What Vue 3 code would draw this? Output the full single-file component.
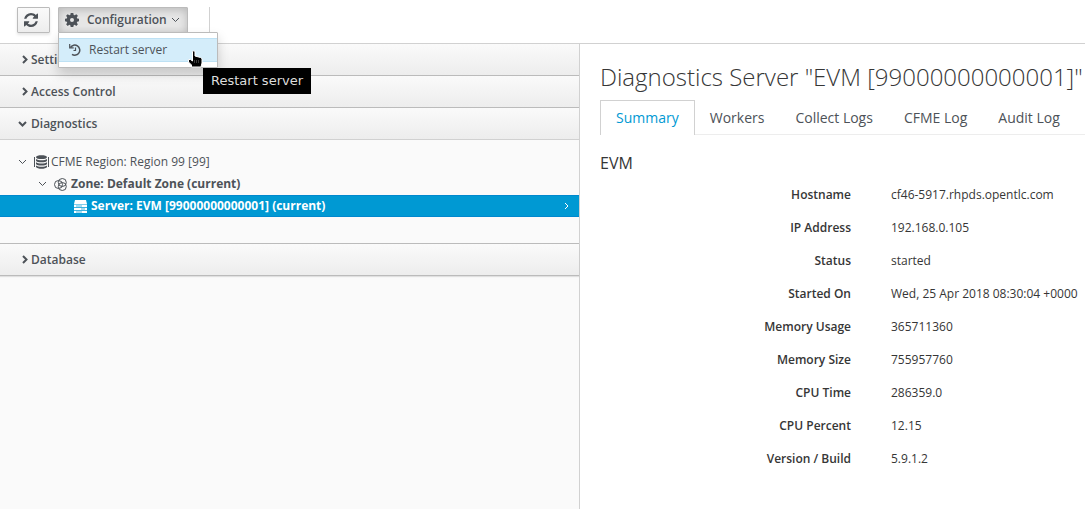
<script setup>
const tabs = ['Summary', 'Workers', 'Collect Logs', 'CFME Log', 'Audit Log']
const rows = [
  ['Hostname', 'cf46-5917.rhpds.opentlc.com'],
  ['IP Address', '192.168.0.105'],
  ['Status', 'started'],
  ['Started On', 'Wed, 25 Apr 2018 08:30:04 +0000'],
  ['Memory Usage', '365711360'],
  ['Memory Size', '755957760'],
  ['CPU Time', '286359.0'],
  ['CPU Percent', '12.15'],
  ['Version / Build', '5.9.1.2'],
]
</script>

<template>
  <div class="app">
    <header class="toolbar">
      <button class="btn refresh" type="button" aria-label="Refresh">
        <svg width="14" height="14" viewBox="0 0 1536 1536" fill="currentColor"><path d="M1511 928q0 5-1 7-64 268-268 434.500T764 1536q-146 0-282.500-55T238 1324l-129 129q-19 19-45 19t-45-19-19-45V960q0-26 19-45t45-19h448q26 0 45 19t19 45-19 45l-137 137q71 66 161 102t187 36q134 0 250-65t186-179q11-17 53-117 8-23 30-23h192q13 0 22.500 9.500T1511 928zM1536 128v448q0 26-19 45t-45 19h-448q-26 0-45-19t-19-45 19-45l138-138Q969 256 768 256q-134 0-250 65T332 500q-11 17-53 117-8 23-30 23H50q-13 0-22.500-9.500T18 608v-7q65-268 270-434.500T768 0q146 0 284 55.500T1297 212l130-129q19-19 45-19t45 19 19 45z" /></svg>
      </button>
      <div class="dropdown">
        <button class="btn open" type="button" aria-haspopup="menu" aria-expanded="true">
          <svg width="14" height="14" viewBox="0 0 14 14" fill="currentColor" fill-rule="evenodd"><path d="M5.700 0h2.600l.4 1.900 1 .4L11.300 1.200l1.600 1.600-1.100 1.600.4 1 1.800.4v2.500l-1.800.4-.4 1 1.100 1.600-1.600 1.600-1.600-1.100-1 .4-.4 1.800H5.700l-.4-1.800-1-.4-1.600 1.100-1.600-1.600 1.100-1.600-.4-1L0 8.300V5.800l1.800-.4.4-1-1.100-1.600 1.600-1.600 1.600 1.100 1-.4zM7 5a2 2 0 1 0 0 4 2 2 0 0 0 0-4z" /></svg>
          <span>Configuration</span>
          <svg width="9" height="6" viewBox="0 0 9 6" class="line"><path d="M1 1l3.500 3.500L8 1" /></svg>
        </button>
        <div class="menu" role="menu">
          <button class="item" type="button" role="menuitem">
            <svg width="12" height="12" viewBox="0 0 12 12" class="history"><path d="M1.500 3.500A5 5 0 1 1 3 10.300" /><path d="M6.500 3.500v3H4.500" class="thin" /><path d="M.700 0v3.800h4" class="thin" /></svg>
            <span>Restart server</span>
          </button>
          <svg class="pointer" width="15" height="18" viewBox="0 0 15 18"><path d="M4.500 1.500q1.500-1.500 2.500 0V6l5.500 1.500q1.500.500 1.500 2V13l-1 4H3.500v-2L.500 12V9.500h2l2 1.500z" fill="#000" stroke="#fff" /><path d="M6.500 10v3M8.500 10v3M10.500 10v3" stroke="#555" stroke-width=".7" /></svg>
          <div class="tooltip" role="tooltip">Restart server</div>
        </div>
      </div>
      <i class="divider"></i>
    </header>

    <main class="columns">
      <aside class="sidebar">
        <button class="panel" type="button"><svg class="line bold" width="6" height="9" viewBox="0 0 6 9"><path d="M1 1l3.500 3.500L1 8" /></svg>Settings</button>
        <button class="panel" type="button"><svg class="line bold" width="6" height="9" viewBox="0 0 6 9"><path d="M1 1l3.500 3.500L1 8" /></svg>Access Control</button>
        <button class="panel expanded" type="button" aria-expanded="true"><svg class="line bold" width="9" height="6" viewBox="0 0 9 6"><path d="M1 1l3.500 3.500L8 1" /></svg>Diagnostics</button>
        <ul class="tree">
          <li class="node">
            <svg class="line" width="9" height="6" viewBox="0 0 9 6"><path d="M1 1l3.500 3.500L8 1" /></svg>
            <svg class="icon region" width="15" height="14" viewBox="0 0 15 14"><path d="M.500 2v10M14.500 2v10" stroke="currentColor" /><path d="M2 2.200C2 -.300 13 -.300 13 2.200S2 4.700 2 2.200zM2 4c2 1.700 9 1.700 11 0v1.800c-1 2-10 2-11 0zM2 7.200c2 1.700 9 1.700 11 0V9c-1 2-10 2-11 0zM2 10.400c2 1.700 9 1.700 11 0v1.500c-1 2.400-10 2.400-11 0z" fill="currentColor" /></svg>
            <span>CFME Region: Region 99 [99]</span>
          </li>
          <li class="node level2">
            <svg class="line" width="9" height="6" viewBox="0 0 9 6"><path d="M1 1l3.500 3.500L8 1" /></svg>
            <svg class="icon zone" width="13" height="13" viewBox="0 0 13 13"><circle cx="4.500" cy="6.500" r="4" /><circle cx="8.300" cy="4.500" r="4" /><circle cx="8.300" cy="8.500" r="4" /></svg>
            <span>Zone: Default Zone (current)</span>
          </li>
          <li class="node level3">
            <svg class="icon" width="13" height="13" viewBox="0 0 13 13"><path d="M1 0h11l1 4H0zM0 4.500h13V7H0zM0 7.700h13V10H0zM0 10.700h13V13H0z" fill="currentColor" /><path d="M2 6h6M7 9h4M2 12h6" stroke="#0099d3" stroke-width=".7" /></svg>
            <span>Server: EVM [99000000000001] (current)</span>
            <svg class="line go" width="5" height="8" viewBox="0 0 5 8"><path d="M1 1l3 3-3 3" /></svg>
          </li>
        </ul>
        <button class="panel last" type="button"><svg class="line bold" width="6" height="9" viewBox="0 0 6 9"><path d="M1 1l3.500 3.500L1 8" /></svg>Database</button>
      </aside>

      <section class="content">
        <h1>Diagnostics Server "EVM [99000000000001]"</h1>
        <nav class="tabs">
          <a v-for="(tab, i) in tabs" :key="tab" href="#" :class="{ active: i === 0 }">{{ tab }}</a>
        </nav>
        <h2>EVM</h2>
        <dl class="details">
          <div v-for="[label, value] in rows" :key="label" class="row">
            <dt>{{ label }}</dt>
            <dd>{{ value }}</dd>
          </div>
        </dl>
      </section>
    </main>
  </div>
</template>

<style>
body { margin: 0; }
</style>

<style scoped>
.app {
  display: flex;
  flex-direction: column;
  min-height: 100vh;
  overflow: hidden;
  background: #fff;
  color: #363636;
  font: 12px/20px "Open Sans", "Noto Sans", sans-serif;
}
button { font: inherit; }
svg { flex: none; }
.toolbar {
  display: flex;
  align-items: center;
  height: 26px;
  padding: 7px 17px 10px;
  border-bottom: 1px solid #d1d1d1;
}
.btn {
  display: flex;
  align-items: center;
  box-sizing: border-box;
  height: 26px;
  border: 1px solid #bbb;
  border-radius: 1px;
  background: linear-gradient(#fafafa, #ededed);
  box-shadow: 0 2px 3px rgba(3, 3, 3, 0.1);
  color: #4d5258;
  font-weight: 600;
}
.refresh { width: 33px; padding: 0 6px; }
.dropdown { position: relative; margin-left: 8px; }
.open {
  gap: 8px;
  padding: 0 7px 0 6px;
  background: #e6e6e6;
  box-shadow: inset 0 2px 8px rgba(3, 3, 3, 0.2);
}
.open .line { margin-left: -4px; }
.line { fill: none; stroke: currentColor; stroke-width: 1; }
.line.bold { stroke-width: 2; }
.divider { height: 26px; margin-left: 21px; border-left: 1px solid #d1d1d1; }
.menu {
  position: absolute;
  z-index: 1;
  top: 25px;
  left: 0;
  width: 158px;
  padding: 5px 0;
  border: 1px solid #bbb;
  border-radius: 1px;
  background: #fff;
  box-shadow: 0 6px 12px rgba(3, 3, 3, 0.175);
}
.item {
  display: flex;
  align-items: center;
  gap: 8px;
  width: 100%;
  height: 24px;
  padding: 0 10px;
  border: solid #bee1f4;
  border-width: 1px 0;
  background: #d4edfa;
  color: #4d5258;
}
.history { fill: none; stroke: currentColor; stroke-width: 1.5; }
.history .thin { stroke-width: 1.2; }
.pointer { position: absolute; top: 17px; left: 129px; }
.tooltip {
  position: absolute;
  top: 35px;
  left: 144px;
  padding: 3px 8px;
  background: #000;
  color: #ddd;
  font: 13px/20px "DejaVu Sans", sans-serif;
  white-space: nowrap;
}
.columns {
  display: grid;
  grid-template-columns: 116fr 101fr;
  flex: 1;
}
.sidebar {
  min-width: 0;
  border-right: 1px solid #d1d1d1;
  background: #fafafa;
}
.panel {
  display: flex;
  align-items: center;
  gap: 3px;
  width: 100%;
  height: 32px;
  padding: 0 22px;
  border: 0;
  border-bottom: 1px solid #bbb;
  background: linear-gradient(#fafafa, #ededed);
  color: #4d5258;
  font-weight: 600;
}
.panel.expanded { padding-left: 18px; gap: 4px; border-color: #d1d1d1; }
.panel.last { height: 33px; border-top: 1px solid #bbb; box-shadow: 0 1px 1px rgba(3, 3, 3, 0.1); }
.tree { margin: 0; padding: 11px 0 26px; list-style: none; }
.node {
  display: flex;
  align-items: center;
  height: 22px;
  padding-left: 18px;
  color: #4d5258;
}
.icon { margin-left: 7px; }
.node span { margin-left: 2px; }
.level2 { padding-left: 38px; font-weight: 700; }
.level3 {
  box-sizing: border-box;
  padding: 0 10px 0 67px;
  border: solid #0088ce;
  border-width: 1px 0;
  background: #0099d3;
  color: #fff;
  font-weight: 700;
}
.level2 span, .level3 span { margin-left: 4px; }
.zone { fill: none; stroke: currentColor; stroke-width: 1; }
.node .go { margin-left: auto; }
.content { min-width: 0; padding: 20px 0 0 20px; }
h1 { margin: 0 0 10px; font-size: 24px; font-weight: 300; line-height: 26px; white-space: nowrap; }
.tabs { display: flex; border-bottom: 1px solid #ededed; white-space: nowrap; }
.tabs a {
  padding: 5px 15px 4px;
  border: 1px solid transparent;
  border-bottom: 0;
  color: #4d5258;
  font-size: 14px;
  line-height: 24px;
  text-decoration: none;
}
.tabs a + a { margin-left: -1px; }
.tabs .active {
  margin-bottom: -1px;
  padding-bottom: 5px;
  border-color: #d1d1d1;
  background: #fff;
  color: #0099d3;
}
h2 { margin: 18px 0 5px; font-size: 16px; font-weight: 400; line-height: 20px; }
.details { margin: 0; }
.row { display: grid; grid-template-columns: 251px 1fr; column-gap: 40px; height: 33px; align-items: center; }
dt { font-weight: 600; text-align: right; }
dd { margin: 0; white-space: nowrap; }
</style>
